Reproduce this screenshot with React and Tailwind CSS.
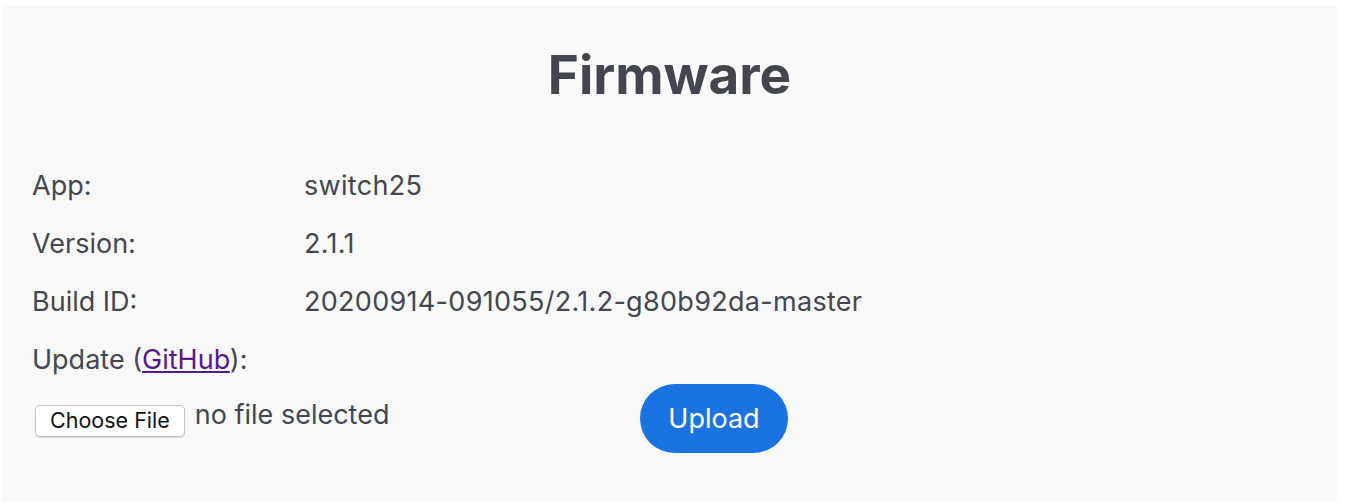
export default function App() {
  const rows = [
    ["App:", "switch25"],
    ["Version:", "2.1.1"],
    ["Build ID:", "20200914-091055/2.1.2-g80b92da-master"],
  ];
  return (
    <div className="min-h-[504px] bg-white pl-[2px] pt-[5px] w-[1337px]" style={{ fontFamily: "Inter, 'Noto Sans', sans-serif" }}>
      <div className="bg-[#f9f9f9] h-[497px] text-[#45464f]">
        <h1 className="text-center text-[53px] font-bold leading-none pt-[44px] pb-[70px] text-[#43454f]">Firmware</h1>
        <div className="pl-[30px] text-[27px] leading-none">
          {rows.map(([k, v]) => (
            <div key={k} className="flex h-[58px] items-start">
              <div className="w-[272px]">{k}</div>
              <div className="tracking-[0.3px]">{v}</div>
            </div>
          ))}
          <div className="h-[38px]">
            Update (<a href="#" className="text-[#551a8b] underline">GitHub</a>):
          </div>
          <div className="flex items-center">
            <div className="flex items-center w-[608px]">
              <button className="ml-[3px] mt-[4px] h-[32px] px-[14px] bg-white border border-[#c4c4c4] rounded-[5px] shadow-[0_1px_1px_rgba(0,0,0,0.15)] text-[21.5px] text-[#111] leading-none">Choose File</button>
              <span className="ml-[10px] mb-[9px]">no file selected</span>
            </div>
            <button className="h-[69px] w-[148px] rounded-full bg-[#1a73e0] text-white text-[27px]">Upload</button>
          </div>
        </div>
      </div>
    </div>
  );
}
